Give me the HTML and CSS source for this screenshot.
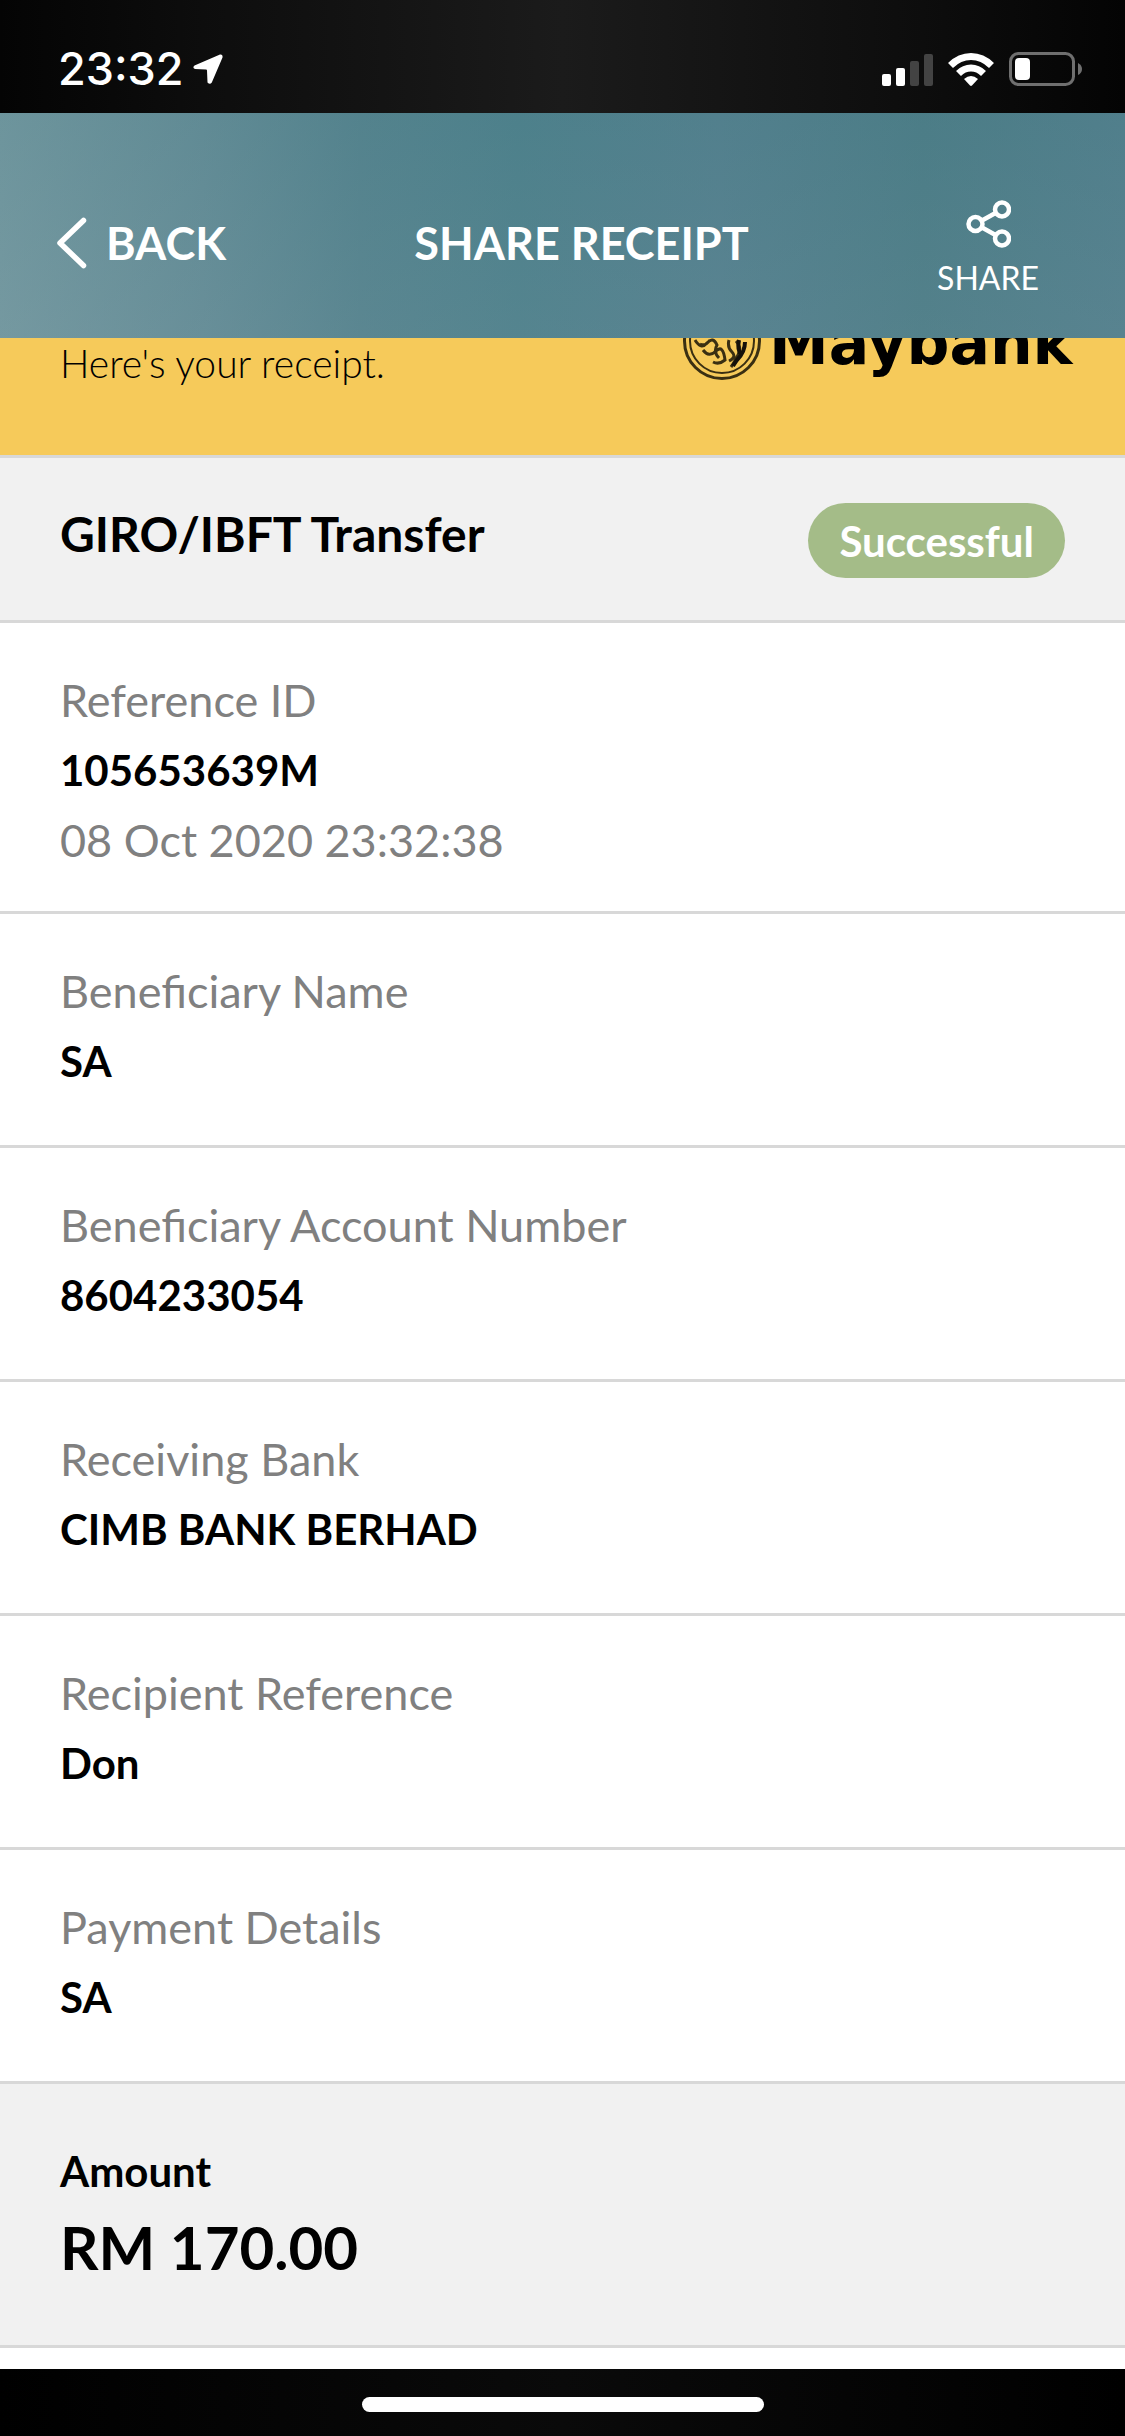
FILE: index.html
```html
<!DOCTYPE html>
<html lang="en">
<head>
<meta charset="utf-8">
<meta name="viewport" content="width=device-width, initial-scale=1">
<title>Share Receipt</title>
<link rel="stylesheet" href="styles.css">
</head>
<body>
<div class="screen">
  <div class="status">
    <div class="status-left">
      <span class="time">23:32</span>
      <svg class="location" viewBox="0 0 30 31" aria-hidden="true"><path d="M1.500 11.500 27 .5Q30 0 29.500 3.500L18.800 28.500Q17 31 14.500 28.500L14 16.500Q14 15.500 13 15.500L2 15Q-1 13.500 1.500 11.500Z" fill="#fff"/></svg>
    </div>
    <div class="status-right">
      <svg class="signal" viewBox="0 0 51 33" aria-hidden="true">
        <g fill="#fff"><rect x="0" y="21" width="9" height="12" rx="2"/><rect x="14" y="15" width="9" height="18" rx="2"/></g>
        <g fill="#434343"><rect x="28" y="8" width="9" height="25" rx="2"/><rect x="42" y="1" width="9" height="32" rx="2"/></g>
      </svg>
      <svg class="wifi" viewBox="0 0 46 33" aria-hidden="true">
        <g fill="none" stroke="#fff" stroke-width="7"><path d="M2.500 12.500Q11.500 3.500 23 3.500T43.500 12.500"/><path d="M10.500 20.500Q16 15 23 15T35.500 20.500"/></g>
        <path d="M16 26Q23 20 30 26L24 32.500Q23 33.300 22 32.500Z" fill="#fff"/>
      </svg>
      <svg class="battery" viewBox="0 0 74 34" aria-hidden="true">
        <rect x="1.500" y="1.500" width="63" height="31" rx="8" fill="none" stroke="#6f6f6f" stroke-width="3"/>
        <rect x="6" y="6" width="15" height="22" rx="4" fill="#fff"/>
        <path d="M69 11Q73 13 73 17T69 23Z" fill="#6f6f6f"/>
      </svg>
    </div>
  </div>

  <header class="header">
    <button class="back" type="button">
      <svg class="chevron" viewBox="0 0 31 52" aria-hidden="true"><path d="M27.500 3.500 4 26 27.500 48.500" fill="none" stroke="#fff" stroke-width="5.500" stroke-linecap="round" stroke-linejoin="round"/></svg>
      BACK
    </button>
    <h1 class="title">SHARE RECEIPT</h1>
    <button class="share" type="button">
      <svg class="share-icon" viewBox="0 0 46 48" aria-hidden="true"><g fill="none" stroke="#fff" stroke-width="4.500"><circle cx="10.500" cy="24" r="7"/><circle cx="37" cy="9.500" r="7"/><circle cx="37" cy="38.500" r="7"/><path d="M17 20.500 30.500 13M17 27.500 30.500 35"/></g></svg>
      SHARE
    </button>
  </header>

  <main class="receipt">
    <section class="banner">
      <p class="banner-text">Here's your receipt.</p>
      <svg class="logo" viewBox="0 0 392 44" role="img" aria-label="Maybank">
        <g fill="none" stroke="#3a2f12">
          <circle cx="39" cy="3" r="37.500" stroke-width="3"/>
          <circle cx="39" cy="3" r="32" stroke-width="2"/>
          <path d="M12 2Q18 12 24 5T34 7Q30 14 36 20M20 12Q26 20 33 13T42 22Q36 27 30 24M17 6Q22 9 27 2M46 2Q44 9 49 14T46 23M53 3Q59 9 55 17T48 29" stroke-width="3"/>
          <path d="M62 4Q62 14 54 22L50 28M56 2Q54 12 58 16" stroke="#15110a" stroke-width="4"/>
        </g>
        <text class="logo-text" x="86" y="26">Maybank</text>
      </svg>
    </section>

    <section class="summary">
      <h2 class="summary-title">GIRO/IBFT Transfer</h2>
      <span class="badge">Successful</span>
    </section>

    <dl class="details">
      <div class="row row-dated">
        <dt>Reference ID</dt>
        <dd>105653639M</dd>
        <dd class="date">08 Oct 2020 23:32:38</dd>
      </div>
      <div class="row"><dt>Beneficiary Name</dt><dd>SA</dd></div>
      <div class="row"><dt>Beneficiary Account Number</dt><dd>8604233054</dd></div>
      <div class="row"><dt>Receiving Bank</dt><dd>CIMB BANK BERHAD</dd></div>
      <div class="row"><dt>Recipient Reference</dt><dd>Don</dd></div>
      <div class="row"><dt>Payment Details</dt><dd>SA</dd></div>
      <div class="row row-amount"><dt>Amount</dt><dd>RM 170.00</dd></div>
    </dl>
  </main>

  <footer class="home"><span class="home-bar"></span></footer>
</div>
</body>
</html>
```
FILE: styles.css
```css
* {
  box-sizing: border-box;
}

body,
h1,
h2,
p,
dl,
dd {
  margin: 0;
}

body {
  background: #fff;
  color: #000;
  font-family: Lato, "Open Sans", sans-serif;
}

svg {
  display: block;
}

button {
  padding: 0;
  border: 0;
  background: none;
  color: #fff;
  font-family: inherit;
}

.screen {
  display: flex;
  flex-direction: column;
  min-height: 100vh;
}

/* Status bar */
.status {
  display: flex;
  justify-content: space-between;
  padding: 42px 42px 17px 58px;
  background: linear-gradient(90deg, #040404, #0d0d0d 18%, #1b1b1b 50%, #0d0d0d 82%, #040404);
}

.status-left,
.status-right {
  display: flex;
  align-items: center;
}

.status-left {
  gap: 9px;
}

.status-right {
  gap: 15px;
}

.time {
  color: #fff;
  font: 500 45px/54px Inter, sans-serif;
}

.location {
  width: 30px;
  height: 31px;
}

.signal {
  width: 51px;
  height: 33px;
}

.wifi {
  width: 46px;
  height: 33px;
}

.battery {
  width: 74px;
  height: 34px;
}

/* Header */
.header {
  display: flex;
  justify-content: space-between;
  align-items: flex-start;
  padding: 84px 86px 40px 56px;
  background:
    linear-gradient(180deg, rgba(74, 124, 136, .3), rgba(100, 138, 150, .3)),
    linear-gradient(90deg, #7c9fa5, #6a919a 18%, #57858f 32%, #4e828c 46%, #55818f 64%, #4c7d86 82%, #53808d);
}

.back {
  display: flex;
  align-items: center;
  gap: 19px;
  padding-top: 20px;
  font-size: 45px;
  font-weight: 700;
  line-height: 52px;
}

.chevron {
  width: 31px;
  height: 52px;
}

.title {
  padding-top: 20px;
  color: #fff;
  font-size: 45px;
  font-weight: 700;
  line-height: 52px;
}

.share {
  display: flex;
  flex-direction: column;
  align-items: center;
  gap: 10px;
  padding-top: 3px;
  font-size: 32px;
  line-height: 40px;
}

.share-icon {
  width: 46px;
  height: 48px;
}

/* Receipt */
.banner {
  display: flex;
  justify-content: space-between;
  align-items: flex-start;
  padding: 0 50px 67px 60px;
  border-bottom: 3px solid #d8d8d8;
  background: #f6ca5a;
}

.banner-text {
  font-size: 39px;
  font-weight: 300;
  line-height: 50px;
}

.logo {
  width: 392px;
  height: 44px;
  overflow: hidden;
}

.logo-text {
  font: 700 60px "DejaVu Sans", sans-serif;
}

.summary {
  display: flex;
  justify-content: space-between;
  align-items: flex-start;
  padding: 45px 60px 42px;
  border-bottom: 3px solid #d8d8d8;
  background: #f1f1f1;
}

.summary-title {
  font-size: 48px;
  font-weight: 700;
  line-height: 62px;
}

.badge {
  padding: 1px 31px 0;
  border-radius: 38px;
  background: #a4bc88;
  color: #fff;
  font-size: 42px;
  font-weight: 700;
  line-height: 74px;
}

.row {
  display: flex;
  flex-direction: column;
  gap: 10px;
  padding: 47px 60px 54px;
  border-bottom: 3px solid #d8d8d8;
  font-size: 42px;
  font-weight: 700;
  line-height: 60px;
}

.row dt,
.row .date {
  color: #808080;
  font-size: 45px;
  font-weight: 400;
}

.row-dated {
  padding-bottom: 41px;
}

.row-amount {
  padding: 57px 60px 62px;
  background: #f1f1f1;
}

.row-amount dt {
  color: #000;
  font-size: 42px;
  font-weight: 700;
}

.row-amount dd {
  font-size: 60px;
  line-height: 72px;
}

/* Home indicator */
.home {
  display: flex;
  justify-content: center;
  margin-top: auto;
  padding: 28px 0 24px;
  background: linear-gradient(90deg, #000, #0a0a0a 50%, #000);
}

.home-bar {
  width: 402px;
  height: 15px;
  border-radius: 8px;
  background: #fff;
}
```
